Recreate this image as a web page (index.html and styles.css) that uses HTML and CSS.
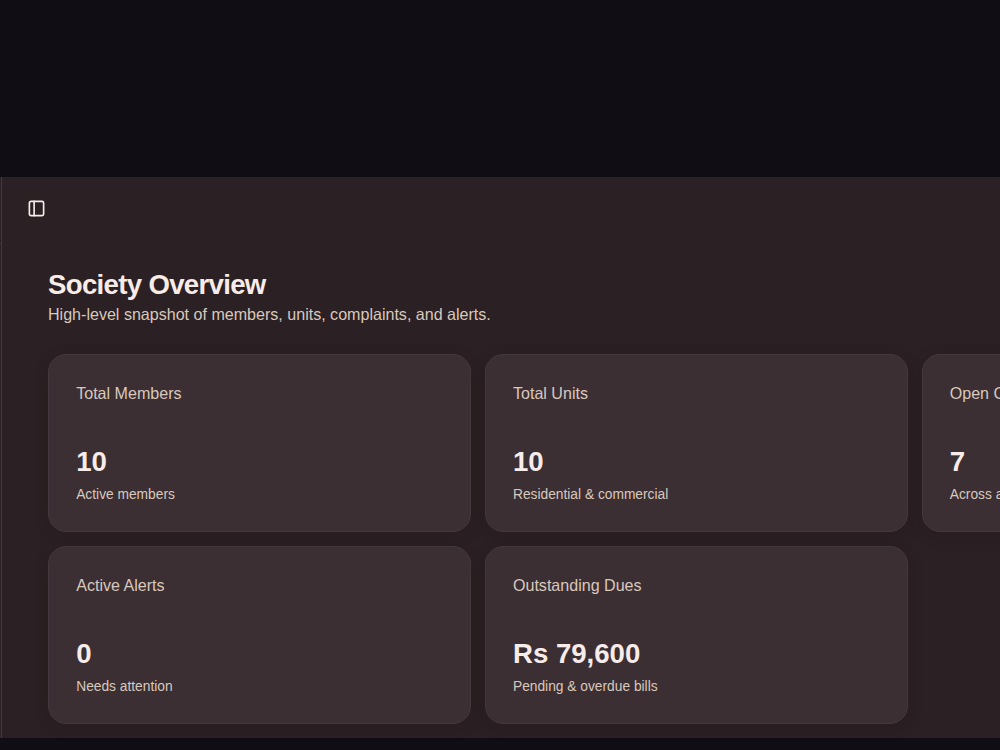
FILE: index.html
```
<!DOCTYPE html>
<html lang="en">
<head>
	<meta charset="utf-8">
	<title>Society Overview</title>
	<link rel="stylesheet" href="styles.css">
</head>
<body>
<div class="app">
	<aside class="sidebar"><div class="sidebar-header"></div></aside>
	<main class="content">
		<header class="topbar">
			<button class="toggle" aria-label="Toggle sidebar">
				<svg width="19" height="19" viewBox="0 0 24 24" fill="none" stroke="currentColor" stroke-width="2.1" stroke-linecap="round" stroke-linejoin="round">
					<rect x="3" y="3" width="18" height="18" rx="2"/>
					<path d="M9 3v18"/>
				</svg>
			</button>
		</header>
		<section class="overview">
			<h1>Society Overview</h1>
			<p class="subtitle">High-level snapshot of members, units, complaints, and alerts.</p>
			<div class="cards">
				<div class="card">
					<h2>Total Members</h2>
					<div class="value">10</div>
					<p class="note">Active members</p>
				</div>
				<div class="card">
					<h2>Total Units</h2>
					<div class="value">10</div>
					<p class="note">Residential &amp; commercial</p>
				</div>
				<div class="card">
					<h2>Open Complaints</h2>
					<div class="value">7</div>
					<p class="note">Across all units</p>
				</div>
				<div class="card">
					<h2>Active Alerts</h2>
					<div class="value">0</div>
					<p class="note">Needs attention</p>
				</div>
				<div class="card">
					<h2>Outstanding Dues</h2>
					<div class="value">Rs 79,600</div>
					<p class="note">Pending &amp; overdue bills</p>
				</div>
			</div>
		</section>
	</main>
</div>
</body>
</html>
```
FILE: styles.css
```
* {
	box-sizing: border-box;
}

body {
	margin: 0;
	padding-top: 177px;
	height: 750px;
	overflow: hidden;
	background: #100e14;
	color: #f7ece9;
	font-family: "Liberation Sans", Arial, sans-serif;
}

h1, h2, p {
	margin: 0;
}

.app {
	display: flex;
	width: 1392px;
	height: 561px;
	background: #2b2023;
}

.sidebar {
	width: 2px;
	flex: none;
	border-right: 1px solid #43383c;
}

.sidebar-header {
	height: 67px;
	border-bottom: 1px solid #43383c;
}

.content {
	flex: 1;
}

.topbar {
	display: flex;
	align-items: center;
	height: 63px;
	padding-left: 25px;
}

.toggle {
	display: flex;
	padding: 0;
	border: 0;
	background: none;
	color: inherit;
}

.overview {
	padding: 29px 46px 0;
}

h1 {
	font-size: 27.6px;
	line-height: 32px;
	letter-spacing: -0.68px;
}

.subtitle {
	margin-top: 2px;
	font-size: 16.07px;
	line-height: 22px;
	color: #d9c8bc;
}

.cards {
	display: grid;
	grid-template-columns: repeat(3, 423.1px);
	gap: 14px 13.7px;
	margin-top: 29px;
}

.card {
	height: 178px;
	padding: 27px 27.2px;
	border: 1px solid #44383e;
	border-radius: 18px;
	background: #3b2f34;
	box-shadow: 0 4px 16px rgba(20, 10, 14, 0.14);
}

.card h2 {
	font-size: 16.07px;
	font-weight: normal;
	line-height: 23px;
	color: #d9c8bc;
}

.value {
	margin-top: 41px;
	font-size: 27.6px;
	font-weight: bold;
	line-height: 32px;
}

.note {
	margin-top: 8px;
	font-size: 13.78px;
	line-height: 18px;
	color: #d9c8bc;
}
```
